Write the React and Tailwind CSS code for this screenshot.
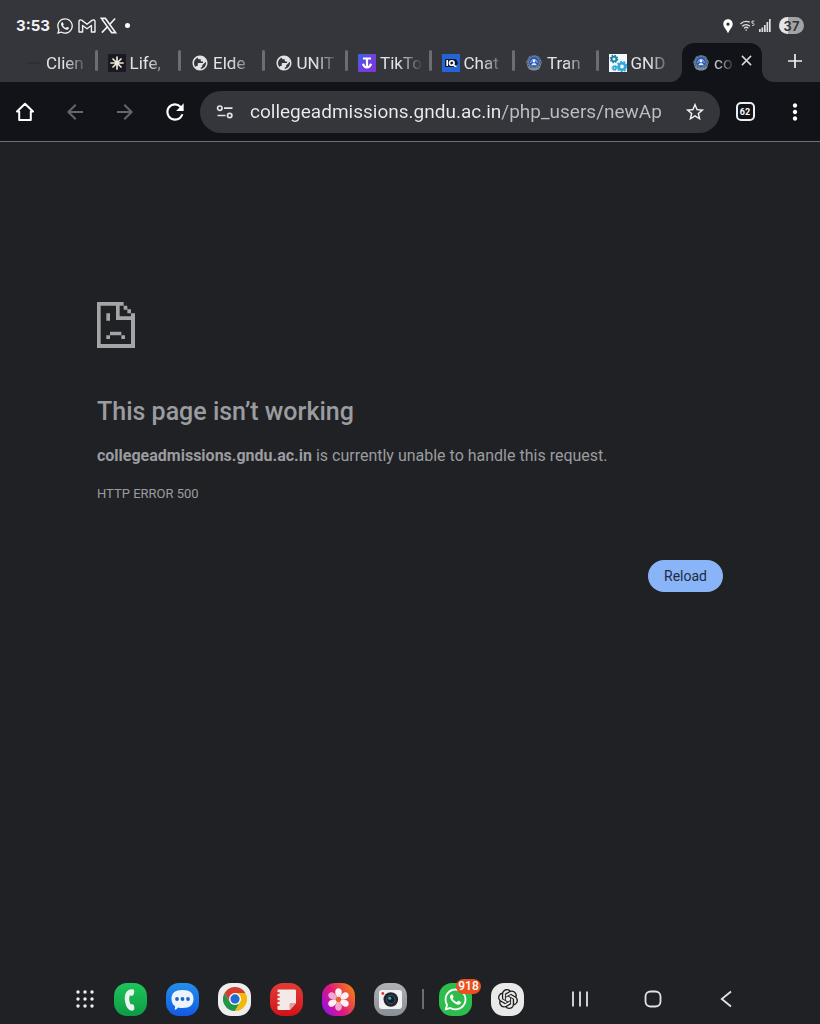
import React from "react";
import { MdPublic, MdArrowBack, MdArrowForward, MdRefresh, MdStarBorder, MdMoreVert, MdLocationPin } from "react-icons/md";
import { FaWhatsapp } from "react-icons/fa";
import { SiOpenai } from "react-icons/si";

function Burst() {
  return (
    <svg viewBox="0 0 18 18" className="size-[18px]" aria-hidden="true">
      <rect width="18" height="18" rx="1" fill="#191a20" />
      <path d="M9 3v12M3 9h12M5 5l8 8M13 5l-8 8" stroke="#efe9dc" strokeWidth="1.7" strokeLinecap="round" />
    </svg>
  );
}

function Download() {
  return (
    <svg viewBox="0 0 18 18" className="size-[18px]" aria-hidden="true">
      <defs>
        <linearGradient id="dl" x1="0" x2="1" y1="0" y2="1">
          <stop stopColor="#3568e8" />
          <stop offset="0.45" stopColor="#6a45e0" />
          <stop offset="1" stopColor="#7a35d8" />
        </linearGradient>
      </defs>
      <rect width="18" height="18" rx="1" fill="url(#dl)" />
      <path d="M5 4.5h8M9 4.500V13M5 9.800c.6 2.200 2 3.600 4 3.600s3.400-1.400 4-3.600" stroke="#fff" strokeWidth="2.200" fill="none" />
    </svg>
  );
}

function Iq() {
  return (
    <svg viewBox="0 0 18 18" className="size-[18px]" aria-hidden="true">
      <rect width="18" height="18" fill="#2563d9" />
      <path d="M3 5h11l2 4-2 4H3z" fill="#10182c" />
      <path d="M5.2 6v6" stroke="#fff" strokeWidth="1.7" />
      <circle cx="9.8" cy="9" r="2.3" stroke="#fff" strokeWidth="1.6" fill="none" />
      <path d="M10.5 10l2.5 2.3h1.5" stroke="#fff" strokeWidth="1.5" fill="none" />
    </svg>
  );
}

function Crest() {
  return (
    <svg viewBox="0 0 18 18" className="size-[18px]" aria-hidden="true">
      <path d="M4 2.5L9 1l5 1.5L16.8 8 15 14l-4 2.500H7L3 14 1.200 8z" fill="#71889d" />
      <circle cx="9" cy="8" r="6.3" fill="none" stroke="#3c5568" strokeWidth="1.2" strokeDasharray="1.5 1" />
      <circle cx="9" cy="8" r="4.9" fill="#2350b4" />
      <path d="M5.8 9c0-5 6.400-5 6.400 0" stroke="#a9c2ea" strokeWidth="1" fill="none" />
      <circle cx="9" cy="7" r="1.500" fill="#f0f3f8" />
      <path d="M6.3 11.3c.6-3 4.8-3 5.4 0z" fill="#dce5f0" />
      <path d="M3 13c3 1.800 9 1.800 12 0l-1.500 2.600h-9z" fill="#8794a2" />
    </svg>
  );
}

function Gears() {
  return (
    <svg viewBox="0 0 18 18" className="size-[18px]" aria-hidden="true">
      <rect width="18" height="18" fill="#f4fafd" />
      <circle cx="5" cy="5" r="2.4" fill="none" stroke="#17809f" strokeWidth="1.8" />
      <circle cx="5" cy="5" r="3.7" fill="none" stroke="#17809f" strokeWidth="1.2" strokeDasharray="1.5 1.4" />
      <circle cx="13" cy="12.5" r="3.2" fill="none" stroke="#2fa8df" strokeWidth="2.6" />
      <circle cx="13" cy="12.5" r="5" fill="none" stroke="#2fa8df" strokeWidth="1.500" strokeDasharray="2 1.500" />
      <circle cx="5.500" cy="14" r="1.500" fill="none" stroke="#35a5d4" strokeWidth="1.600" />
      <circle cx="5.500" cy="14" r="2.600" fill="none" stroke="#35a5d4" strokeWidth="1" strokeDasharray="1.3 1.1" />
    </svg>
  );
}

function Faint() {
  return (
    <svg viewBox="0 0 18 18" className="size-[18px]" aria-hidden="true">
      <path d="M3 8.500h13v1.500H3z" fill="#2c2e31" />
    </svg>
  );
}

const globe = <MdPublic className="size-[18px] -scale-x-100 text-[#e3e3e6]" />;

const tabs = [
  { label: "Clien", icon: <Faint /> },
  { label: "Life,", icon: <Burst /> },
  { label: "Elde", icon: globe },
  { label: "UNIT", icon: globe },
  { label: "TikTo", icon: <Download /> },
  { label: "Chat", icon: <Iq /> },
  { label: "Tran", icon: <Crest /> },
  { label: "GND", icon: <Gears />, last: true },
];

function StatusBar() {
  return (
    <div className="flex h-[43px] items-center justify-between pt-2 pr-4 pl-4">
      <div className="flex items-center gap-1 text-[#f2f2f4]">
        <span className="mr-0.5 font-['Inter',sans-serif] text-[15px] leading-5 font-bold">3:53</span>
        <FaWhatsapp className="size-[18px]" />
        <svg viewBox="0 0 18 14" className="h-3.5 w-[18px]" fill="none" stroke="currentColor" strokeWidth="1.400" strokeLinejoin="round" aria-hidden="true">
          <path d="M1 13V2.500C1 .8 2.800.5 4 1.400L9 5.300l5-3.900c1.200-.9 3-.6 3 1.100V13h-3.600V6.500L9 9.800 4.600 6.500V13z" />
        </svg>
        <svg viewBox="0 0 18 18" className="size-[17px]" fill="none" stroke="currentColor" strokeWidth="1.700" aria-hidden="true">
          <path d="M1.500 1.500h4.200l10.800 15h-4.200zM16 1.500L10 8.200M8 10.200l-6 6.300" />
        </svg>
        <span className="ml-1 size-[5px] rounded-full bg-white" />
      </div>
      <div className="flex items-center gap-1 text-[#dddde0]">
        <MdLocationPin className="size-4 text-white" />
        <svg viewBox="0 0 15 12" className="h-3 w-[15px]" fill="none" stroke="currentColor" strokeWidth="1.300" aria-hidden="true">
          <path d="M.5 4C3 1.300 6.800 1 9.800 2.200M2.200 6.200c2.200-2 5.500-2 7.800 0M4 8.200c1.400-1.200 3-1.200 4.300 0" />
          <circle cx="6.200" cy="10" r=".8" fill="currentColor" stroke="none" />
          <path d="M14.300 1.200h-2.300v2c2.800-.5 2.800 2.800 0 2.300" strokeWidth="1" />
        </svg>
        <svg viewBox="0 0 12 13" className="mr-1 h-[13px] w-3" fill="currentColor" aria-hidden="true">
          <path d="M0 10h1.700v3H0zM2.500 8.500h1.700V13H2.500zM5 6h1.700v7H5zM7.500 3h1.700v10H7.500zM10 0h1.700v13H10z" />
        </svg>
        <span className="flex h-[17px] w-[25px] items-center justify-center rounded-full bg-linear-to-r from-[#e4e4e6] from-37% to-[#a3a3a6] to-37% font-['Inter',sans-serif] text-[13px] leading-4 font-semibold text-[#303136]">37</span>
      </div>
    </div>
  );
}

function TabStrip() {
  return (
    <div className="flex h-[39px] pl-3.5">
      <div role="tablist" aria-label="Open tabs" className="flex min-w-0 flex-1">
        {tabs.map((t, i) => (
          <button key={i} role="tab" aria-selected="false" className="flex min-w-0 flex-1 items-center pl-2.5 text-left">
            <span className="shrink-0">{t.icon}</span>
            <span className="ml-1 min-w-0 flex-1 overflow-hidden text-[17px] leading-6 whitespace-nowrap text-[#e3e3e6] [mask-image:linear-gradient(to_right,#000_45%,transparent_105%)]">{t.label}</span>
            <span className={t.last ? "ml-2 w-[3px]" : "mb-1 ml-2 h-[21px] w-[3px] rounded-full bg-[#6c6d72]"} />
          </button>
        ))}
      </div>
      <div className="relative flex w-20 shrink-0 items-center rounded-t-xl bg-[#121318] pr-2 pl-2.5">
        <svg viewBox="0 0 12 12" className="absolute bottom-0 -left-3 size-3" aria-hidden="true"><path d="M12 0v12H0A12 12 0 0 0 12 0z" fill="#121318" /></svg>
        <svg viewBox="0 0 12 12" className="absolute -right-3 bottom-0 size-3" aria-hidden="true"><path d="M0 0v12h12A12 12 0 0 1 0 0z" fill="#121318" /></svg>
        <Crest />
        <span className="ml-1 min-w-0 flex-1 overflow-hidden text-[17px] leading-6 whitespace-nowrap text-[#c4c4c8] [mask-image:linear-gradient(to_right,#000_20%,transparent_110%)]">co</span>
        <button aria-label="Close tab" className="ml-1 flex w-4 justify-center pb-1 text-[#d6d6d9]">
          <svg viewBox="0 0 12 12" className="size-[11px] shrink-0" stroke="currentColor" strokeWidth="1.700"><path d="M1 1l10 10M11 1L1 11" /></svg>
        </button>
      </div>
      <button aria-label="New tab" className="flex w-[58px] shrink-0 items-center justify-center pb-1 pl-2 text-[#eeeeef]">
        <svg viewBox="0 0 14 14" className="size-3.5" stroke="currentColor" strokeWidth="1.700"><path d="M7 0v14M0 7h14" /></svg>
      </button>
    </div>
  );
}

function Toolbar() {
  return (
    <nav aria-label="Browser toolbar" className="flex h-[60px] items-center border-b border-[#707176] bg-[#121318] text-white">
      <button aria-label="Home" className="flex w-[50px] shrink-0 justify-center">
        <svg viewBox="0 0 20 20" className="size-5" fill="none" stroke="currentColor" strokeWidth="2" strokeLinejoin="round"><path d="M10 1.800L18 9.500h-2.200V18H4.200V9.500H2z" /></svg>
      </button>
      <button aria-label="Back" className="flex w-[50px] shrink-0 justify-center text-[#66676b]"><MdArrowBack className="size-6" /></button>
      <button aria-label="Forward" className="flex w-[50px] shrink-0 justify-center text-[#66676b]"><MdArrowForward className="size-6" /></button>
      <button aria-label="Reload page" className="flex w-[50px] shrink-0 justify-center"><MdRefresh className="size-[26px]" /></button>
      <div className="flex h-[42px] min-w-0 flex-1 items-center rounded-full bg-[#35363b] pr-3.5 pl-4">
        <button aria-label="Site information" className="shrink-0">
          <svg viewBox="0 0 18 14" className="h-3.5 w-[18px]" fill="none" stroke="#e3e3e6" strokeWidth="1.700"><circle cx="3.800" cy="3.200" r="2.200" /><path d="M8 3.200h8.500M1.500 10.500h8" /><circle cx="13.700" cy="10.500" r="2.200" /></svg>
        </button>
        <input aria-label="Address" defaultValue="collegeadmissions.gndu.ac.in/php_users/newAp" className="ml-4 min-w-0 flex-1 bg-linear-to-r from-[#ececef] from-[251px] to-[#bdbdc2] to-[251px] bg-clip-text text-[19px] leading-7 text-transparent outline-none" />
        <button aria-label="Bookmark" className="ml-5 shrink-0 text-[#f0f0f2]"><MdStarBorder className="size-[22px]" /></button>
      </div>
      <button aria-label="Open tabs: 62" className="flex w-[50px] shrink-0 justify-center">
        <span className="flex h-[19px] w-[19px] items-center justify-center rounded-[5px] border-2 border-[#eeeef0] text-[9px] leading-3 font-bold">62</span>
      </button>
      <button aria-label="More options" className="flex w-[50px] shrink-0 justify-center"><MdMoreVert className="size-[26px]" /></button>
    </nav>
  );
}

function SadPage() {
  return (
    <svg viewBox="0 0 114 138" className="h-[46px] w-[38px]" fill="#a4a5a7" aria-hidden="true">
      <path d="M0 0h80v11h11v11h11v12h12v104H0zM11 11v115h91V54H57V11zM68 11v32h34v-9H91V23H80V11z" fillRule="evenodd" />
      <path d="M28 34h11v22H28zM39 89h34v11H39zM28 100h11v11H28zM73 100h11v11H73z" />
    </svg>
  );
}

const tile = "relative flex size-[33px] shrink-0 items-center justify-center rounded-[13px]";

function Dock() {
  return (
    <footer className="flex h-[50px] items-center justify-center pr-2">
      <div className="flex items-center gap-[19px]">
        <button aria-label="All apps" className="flex w-5 justify-center">
          <svg viewBox="0 0 18 18" className="size-[18px]" fill="#f0f0f2">
            {[2, 9, 16].map((y) => [2, 9, 16].map((x) => <circle key={`${x}-${y}`} cx={x} cy={y} r="1.700" />))}
          </svg>
        </button>
        <button aria-label="Phone" className={`${tile} bg-linear-to-b from-[#1fc45a] to-[#0c9c45]`}>
          <svg viewBox="0 0 33 33" className="size-[33px]"><path d="M19.500 6.500c-7.500-1.200-10 6-8.200 13 .9 4.600 3.200 8.200 7 8.200 2 0 2.600-2.200 1.700-5-.5-1.600-2-1.600-3.200-1.100-1.800-3-2-6.500-.9-9.300 1.300.8 3 .8 3.700-.7.800-2 .9-4.600-.1-5.100z" fill="#e9f5ec" /></svg>
        </button>
        <button aria-label="Messages" className={`${tile} bg-linear-to-b from-[#2590ea] to-[#1559e4]`}>
          <svg viewBox="0 0 33 33" className="size-[33px]"><path d="M16.500 7c7.500 0 11 2.800 11 8.800 0 6.200-3.500 9.200-11 9.200-2 0-3.200-.1-4.500-.5-1 1.600-2.200 2.200-3.500 2.200.7-1.200.7-2.400.4-3.600-2.300-1.600-3.400-4-3.400-7.300 0-6 3.500-8.800 11-8.800z" fill="#edf3fb" /><g fill="#1c62cf"><circle cx="11" cy="16" r="1.900" /><circle cx="16.500" cy="16" r="1.900" /><circle cx="22" cy="16" r="1.900" /></g></svg>
        </button>
        <button aria-label="Chrome" className={`${tile} bg-[#eeeeee]`}>
          <svg viewBox="0 0 48 48" className="size-6">
            <path d="M3.200 12A24 24 0 0 1 44.800 12H24z" fill="#d83b30" />
            <path d="M3.200 12H24L13.600 30z" fill="#d83b30" />
            <path d="M3.200 12L13.600 30 34.400 30 24 48A24 24 0 0 1 3.200 12z" fill="#249547" />
            <path d="M34.400 30L24 48a24 24 0 0 0 20.800-36H24z" fill="#f1b90a" />
            <circle cx="24" cy="24" r="12" fill="#fff" /><circle cx="24" cy="24" r="9.300" fill="#236bd2" />
          </svg>
        </button>
        <button aria-label="Notes" className={`${tile} bg-linear-to-b from-[#e33a35] to-[#cf1118]`}>
          <svg viewBox="0 0 33 33" className="size-[33px]"><path d="M8.500 6.500h16c1 0 1.500.5 1.500 1.500v12l-6 7H8.500c-.8 0-1-.5-1-1.200V7.700c0-.8.300-1.200 1-1.200z" fill="#f3e9e8" /><path d="M26 20h-5c-1 0-1.500.5-1.500 1.500V27z" fill="#dfa09c" /><path d="M7 10h2M7 14h2M7 18h2M7 22h2" stroke="#d52325" strokeWidth="1.700" strokeLinecap="round" /></svg>
        </button>
        <button aria-label="Gallery" className={`${tile} bg-[linear-gradient(60deg,#8f12ee_5%,#e0187e_45%,#f57a12_90%)]`}>
          <svg viewBox="0 0 33 33" className="size-[33px]">
            {[180, 300, 0, 60, 120, 240].map((a) => (
              <path key={a} transform={`rotate(${a} 16.500 16.500)`} d="M16.500 15.500c-2.200-2.500-3.400-4.500-3.300-6.800.1-2.200 1.500-3.500 3.300-3.500s3.200 1.300 3.300 3.500c.1 2.300-1.100 4.300-3.300 6.800z" fill={a === 180 || a === 300 ? "#f3a9cd" : "#fff0f6"} />
            ))}
            <circle cx="16.500" cy="16.500" r="2.700" fill="#e8622c" />
          </svg>
        </button>
        <button aria-label="Camera" className={`${tile} bg-linear-to-b from-[#aeb2b7] to-[#898f96]`}>
          <svg viewBox="0 0 33 33" className="size-[33px]"><rect x="5" y="7" width="23" height="19" rx="3" fill="#f2f2f2" /><circle cx="8.800" cy="10.500" r="1.400" fill="#d93a32" /><circle cx="16.800" cy="16.500" r="7.300" fill="#22262b" /><circle cx="16.800" cy="16.500" r="4.200" fill="#10202d" stroke="#45525e" /><circle cx="15.700" cy="15.300" r="1.500" fill="#39aeca" /></svg>
        </button>
        <span className="-mx-1 h-5 w-0.5 bg-[#6c6d70]" />
        <button aria-label="WhatsApp, 918 unread" className={`${tile} bg-[#2cbd4d] text-white`}>
          <FaWhatsapp className="size-[25px]" />
          <span className="absolute -top-1 left-[17px] flex h-[15px] w-[25px] items-center justify-center rounded-full bg-[#e9501f] text-xs font-medium">918</span>
        </button>
        <button aria-label="ChatGPT" className={`${tile} bg-[#e9e9e9] text-[#1c1c1d]`}>
          <SiOpenai className="size-5" />
        </button>
      </div>
      <div className="ml-11 flex items-center gap-[50px] text-[#e3e3e6]">
        <button aria-label="Recent apps" className="flex w-[23px] justify-center"><svg viewBox="0 0 18 18" className="size-[18px]" stroke="currentColor" strokeWidth="1.800"><path d="M2 1.500v15M9 1.500v15M16 1.500v15" /></svg></button>
        <button aria-label="Home screen" className="flex w-[23px] justify-center"><svg viewBox="0 0 18 18" className="size-[18px]" fill="none" stroke="currentColor" strokeWidth="1.800"><rect x="1.500" y="1.500" width="15" height="15" rx="5" /></svg></button>
        <button aria-label="Go back" className="flex w-[23px] justify-center"><svg viewBox="0 0 12 18" className="h-[18px] w-3" fill="none" stroke="currentColor" strokeWidth="1.800"><path d="M11 1.500L1.800 9l9.200 7.500" /></svg></button>
      </div>
    </footer>
  );
}

export default function App() {
  return (
    <div className="flex min-h-screen flex-col bg-[#202124] font-['Roboto',sans-serif]">
      <header>
        <div className="bg-[#35363b]">
          <StatusBar />
          <TabStrip />
        </div>
        <Toolbar />
      </header>
      <main className="mx-[97px] flex-1 pt-40 text-[#9a9ca0]">
        <SadPage />
        <h1 className="mt-12 text-[25px] leading-8 font-medium">This page isn’t working</h1>
        <p className="mt-4 text-base leading-6"><strong className="font-bold">collegeadmissions.gndu.ac.in</strong> is currently unable to handle this request.</p>
        <p className="mt-4 text-[13px] leading-5">HTTP ERROR 500</p>
        <div className="mt-14 flex justify-end">
          <button className="h-8 rounded-full bg-[#8ab4f8] px-4 text-sm leading-5 text-[#202b40]">Reload</button>
        </div>
      </main>
      <Dock />
    </div>
  );
}
